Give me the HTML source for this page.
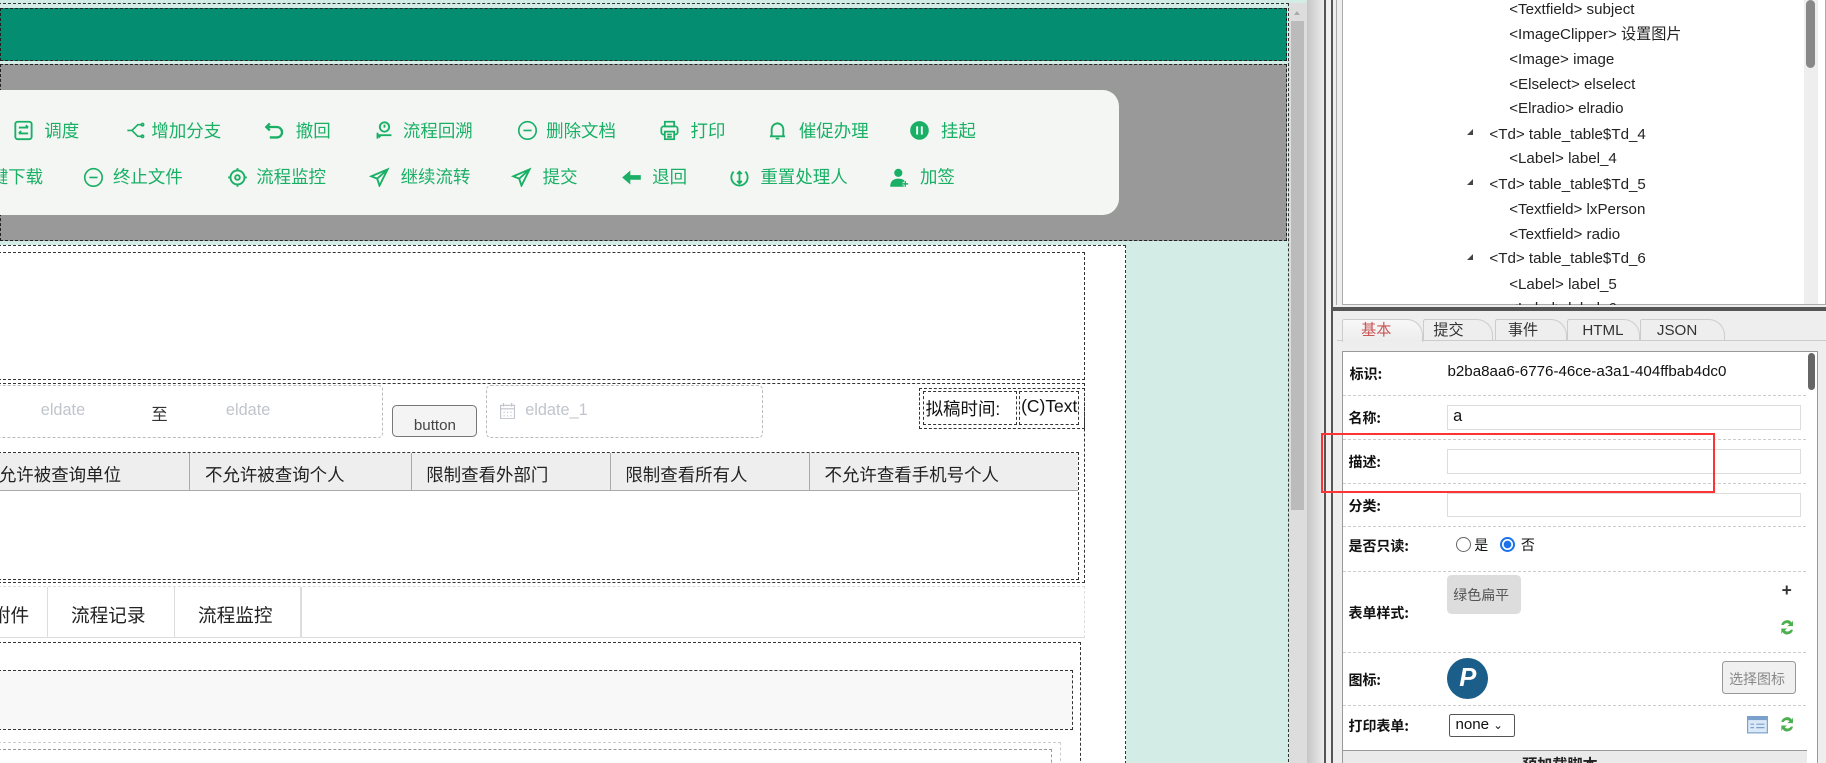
<!DOCTYPE html>
<html><head><meta charset="utf-8">
<style>
*{box-sizing:border-box;margin:0;padding:0}
html,body{width:1826px;height:763px;overflow:hidden;background:#fff}
#root{zoom:1.1645;width:1568px;height:655px;position:relative;overflow:hidden;font-family:"Liberation Sans","Noto Sans CJK SC",sans-serif}
.a{position:absolute}
.dash{border:1px dashed #333}
.tb{color:#19b065;font-size:15px;white-space:nowrap}
.tb svg{position:absolute;width:18px;height:18px}
.tree{font-size:13px;color:#222;white-space:nowrap;line-height:16px;height:16px}
.lbl{font-size:12px;font-weight:bold;color:#111;font-family:"Noto Sans CJK SC",sans-serif}
.inp{border:1px solid #ddd;background:#fff;height:21px}
.sep{border-top:1px dashed #ccc;height:0}
.th{font-size:15px;color:#222;white-space:nowrap}
.tab{font-size:13px;color:#333;line-height:16px}
</style></head><body><div id="root">
<div class="a" style="left:0;top:0;width:1122px;height:655px;background:#d4ece6"></div>
<div class="a dash" style="left:-2px;top:3px;width:1109px;height:660px"></div>
<div class="a" style="left:0;top:7px;width:1105px;height:45px;background:#048d71;border:1px dashed #222"></div>
<div class="a" style="left:0;top:55px;width:1105px;height:152px;background:#999;border:1px dashed #222"></div>
<div class="a" style="left:-20px;top:77px;width:981px;height:108px;background:#f4f6f4;border-radius:14px"></div>

<div class="a tb" style="left:0;top:101px;width:961px;height:22px">
<svg style="left:11px;top:2px" viewBox="0 0 18 18" fill="none" stroke="#19b065" stroke-width="1.6"><rect x="2" y="1.5" width="14" height="15" rx="2"/><path d="M5 6.5h8M11 4.5l2 2M5 11.5h8M7 9.5l-2 2"/></svg><span class="a" style="left:38px;top:0">调度</span>
<svg style="left:107px;top:2px" viewBox="0 0 18 18" fill="none" stroke="#19b065" stroke-width="1.4"><path d="M2 9h4l5-5h3M6 9l5 5h3"/><circle cx="15" cy="4" r="1"/><circle cx="15" cy="14" r="1"/></svg><span class="a" style="left:130px;top:0">增加分支</span>
<svg style="left:227px;top:2px" viewBox="0 0 18 18" fill="none" stroke="#19b065" stroke-width="2"><path d="M5 3L2 6l3 3M2 6h9a4.5 4.5 0 010 9H5"/></svg><span class="a" style="left:254px;top:0">撤回</span>
<svg style="left:321px;top:2px" viewBox="0 0 18 18" fill="none" stroke="#19b065" stroke-width="1.6"><circle cx="9" cy="6" r="4"/><path d="M9 4v2.5M3 13h12M3 11v5M6 13l-2 2"/></svg><span class="a" style="left:346px;top:0">流程回溯</span>
<svg style="left:444px;top:2px" viewBox="0 0 18 18" fill="none" stroke="#19b065" stroke-width="1.4"><circle cx="9" cy="9" r="7.5"/><path d="M5.5 9h7"/></svg><span class="a" style="left:469px;top:0">删除文档</span>
<svg style="left:566px;top:2px" viewBox="0 0 18 18" fill="none" stroke="#19b065" stroke-width="1.5"><rect x="5" y="1.5" width="8" height="4"/><rect x="2" y="5.5" width="14" height="7" rx="2"/><rect x="5" y="10" width="8" height="6.5" fill="#f4f6f4"/><path d="M7 12.5h4M7 14.5h4"/></svg><span class="a" style="left:593px;top:0">打印</span>
<svg style="left:659px;top:2px" viewBox="0 0 18 18" fill="none" stroke="#19b065" stroke-width="1.6"><path d="M4 14V8a5 5 0 0110 0v6M2.5 14h13M7.5 16h3M9 2v1"/></svg><span class="a" style="left:686px;top:0">催促办理</span>
<svg style="left:781px;top:2px" viewBox="0 0 18 18"><circle cx="9" cy="9" r="8" fill="#19b065"/><path d="M7 5.5v7M11 5.5v7" stroke="#fff" stroke-width="1.6"/></svg><span class="a" style="left:808px;top:0">挂起</span>
</div>
<div class="a tb" style="left:0;top:141px;width:961px;height:22px">
<span class="a" style="left:-8px;top:0">键下载</span>
<svg style="left:71px;top:2px" viewBox="0 0 18 18" fill="none" stroke="#19b065" stroke-width="1.4"><circle cx="9" cy="9" r="7.5"/><path d="M5.5 9h7"/></svg><span class="a" style="left:97px;top:0">终止文件</span>
<svg style="left:195px;top:2px" viewBox="0 0 18 18" fill="none" stroke="#19b065" stroke-width="1.6"><circle cx="9" cy="9" r="6"/><circle cx="9" cy="9" r="2"/><path d="M9 1v2M9 15v2M1 9h2M15 9h2"/></svg><span class="a" style="left:220px;top:0">流程监控</span>
<svg style="left:317px;top:2px" viewBox="0 0 18 18" fill="none" stroke="#19b065" stroke-width="1.6"><path d="M16 2L2 8l5 2 2 6zM7 10l9-8"/></svg><span class="a" style="left:344px;top:0">继续流转</span>
<svg style="left:439px;top:2px" viewBox="0 0 18 18" fill="none" stroke="#19b065" stroke-width="1.6"><path d="M16 2L2 8l5 2 2 6zM7 10l9-8"/></svg><span class="a" style="left:466px;top:0">提交</span>
<svg style="left:533px;top:2px" viewBox="0 0 18 18"><path d="M1 9l7-6v4h9v4H8v4z" fill="#19b065"/></svg><span class="a" style="left:560px;top:0">退回</span>
<svg style="left:626px;top:2px" viewBox="0 0 18 18" fill="none" stroke="#19b065" stroke-width="1.6"><path d="M4 4a7 7 0 1010 0"/><path d="M9 4v10M7 6l2-2 2 2M7 12l2 2 2-2"/></svg><span class="a" style="left:653px;top:0">重置处理人</span>
<svg style="left:763px;top:2px" viewBox="0 0 18 18"><circle cx="8" cy="5" r="3.5" fill="#19b065"/><path d="M1 17c0-5 3-7 7-7s6 2 6 3v4z" fill="#19b065"/><path d="M14 12v5M11.5 14.5h5" stroke="#fff" stroke-width="2.5"/><path d="M14 12v5M11.5 14.5h5" stroke="#19b065" stroke-width="1.2"/></svg><span class="a" style="left:790px;top:0">加签</span>
</div>

<div class="a" style="left:-2px;top:210px;width:969px;height:450px;background:#fff;border:1px dashed #333"></div>
<div class="a dash" style="left:-2px;top:216px;width:934px;height:110px"></div>
<div class="a dash" style="left:-2px;top:329px;width:934px;height:172px"></div>
<div class="a" style="left:-10px;top:331px;width:339px;height:45px;border:1px dashed #bbb;border-radius:4px"></div>
<div class="a" style="left:35px;top:344px;font-size:14px;color:#c0c4cc">eldate</div>
<div class="a" style="left:130px;top:344px;font-size:14px;color:#333">至</div>
<div class="a" style="left:194px;top:344px;font-size:14px;color:#c0c4cc">eldate</div>
<div class="a" style="left:337px;top:348px;width:73px;height:27px;border:1px solid #777;border-radius:4px;background:#f4f4f4;font-size:13px;color:#444;text-align:center;padding-top:10px;line-height:14px">button</div>
<div class="a" style="left:417px;top:331px;width:238px;height:45px;border:1px dashed #bbb;border-radius:4px"></div>
<svg class="a" style="left:429px;top:346px" width="13" height="14" viewBox="0 0 13 14" fill="none" stroke="#c0c4cc"><rect x="0.5" y="2" width="12" height="11.5"/><path d="M3 0v3M10 0v3M0.5 5h12M3 8h1M6 8h1M9 8h1M3 11h1M6 11h1M9 11h1"/></svg>
<div class="a" style="left:451px;top:344px;font-size:14px;color:#c0c4cc">eldate_1</div>
<div class="a dash" style="left:789px;top:333px;width:143px;height:35px"></div>
<div class="a dash" style="left:793px;top:336px;width:80px;height:29px;font-size:15px;color:#111;padding:3px 0 0 1px">拟稿时间:</div>
<div class="a dash" style="left:875px;top:336px;width:52px;height:29px;font-size:15px;color:#111;padding:3px 0 0 1px;overflow:hidden;white-space:nowrap">(C)Text</div>
<div class="a dash" style="left:-2px;top:388px;width:929px;height:110px"></div>
<div class="a" style="left:0;top:389px;width:926px;height:33px;background:#eee;border-bottom:1px solid #aaa"></div>
<div class="a" style="left:162px;top:389px;width:1px;height:33px;background:#aaa"></div>
<div class="a" style="left:353px;top:389px;width:1px;height:33px;background:#aaa"></div>
<div class="a" style="left:524px;top:389px;width:1px;height:33px;background:#aaa"></div>
<div class="a" style="left:695px;top:389px;width:1px;height:33px;background:#aaa"></div>
<div class="a th" style="left:-1px;top:397px">允许被查询单位</div>
<div class="a th" style="left:176px;top:397px">不允许被查询个人</div>
<div class="a th" style="left:366px;top:397px">限制查看外部门</div>
<div class="a th" style="left:537px;top:397px">限制查看所有人</div>
<div class="a th" style="left:708px;top:397px">不允许查看手机号个人</div>
<div class="a" style="left:-2px;top:503px;width:934px;height:45px;border:1px dashed #ddd;border-bottom:1px solid #ddd"></div>
<div class="a" style="left:40px;top:504px;width:1px;height:43px;background:#ddd"></div>
<div class="a" style="left:149px;top:504px;width:1px;height:43px;background:#ddd"></div>
<div class="a" style="left:258px;top:504px;width:1px;height:43px;background:#ddd"></div>
<div class="a" style="left:-7px;top:516px;font-size:16px;color:#222">附件</div>
<div class="a" style="left:61px;top:516px;font-size:16px;color:#222">流程记录</div>
<div class="a" style="left:170px;top:516px;font-size:16px;color:#222">流程监控</div>
<div class="a dash" style="left:-2px;top:551px;width:930px;height:120px"></div>
<div class="a dash" style="left:-2px;top:575px;width:923px;height:52px;background:#f8f8f8"></div>
<div class="a" style="left:-2px;top:637px;width:913px;height:30px;border:1px dashed #ccc"></div>
<div class="a" style="left:-2px;top:643px;width:905px;height:30px;border:1px dashed #999"></div>

<div class="a" style="left:1107px;top:3px;width:15px;height:652px;background:#ddd"></div>
<div class="a" style="left:1109px;top:18px;width:11px;height:420px;background:#bbb"></div>
<div class="a" style="left:1111px;top:7px;width:0;height:0;border:3px solid transparent;border-bottom:4px solid #aaa"></div>
<div class="a" style="left:1122px;top:0;width:15px;height:655px;background:linear-gradient(90deg,#c6c6c6,#ececec)"></div>
<div class="a" style="left:1137px;top:0;width:2px;height:655px;background:#555"></div>
<div class="a" style="left:1139px;top:0;width:4px;height:655px;background:#f0f0f0"></div>
<div class="a" style="left:1143px;top:0;width:2px;height:655px;background:#555"></div>

<div class="a" style="left:1145px;top:0;width:423px;height:655px;background:#eee"></div>
<div class="a" style="left:1152px;top:0;width:416px;height:262px;background:#fff;border-left:1px solid #aaa;border-right:1px solid #aaa;border-bottom:1px solid #aaa"></div>
<div class="a" style="left:1147px;top:0;width:1px;height:262px;background:#aaa"></div>
<div class="a" style="left:1549px;top:0;width:12px;height:261px;background:#eee"></div>
<div class="a" style="left:1551px;top:0;width:8px;height:58px;background:#888;border-radius:4px"></div>
<div style="position:absolute;left:0;top:1px;width:1568px;height:262px;overflow:hidden">
<div class="a tree" style="left:1296px;top:0">&lt;Textfield&gt; subject</div>
<div class="a tree" style="left:1296px;top:21px">&lt;ImageClipper&gt; 设置图片</div>
<div class="a tree" style="left:1296px;top:43px">&lt;Image&gt; image</div>
<div class="a tree" style="left:1296px;top:64px">&lt;Elselect&gt; elselect</div>
<div class="a tree" style="left:1296px;top:85px">&lt;Elradio&gt; elradio</div>
<div class="a tree" style="left:1279px;top:107px">&lt;Td&gt; table_table$Td_4</div>
<div class="a tree" style="left:1296px;top:128px">&lt;Label&gt; label_4</div>
<div class="a tree" style="left:1279px;top:150px">&lt;Td&gt; table_table$Td_5</div>
<div class="a tree" style="left:1296px;top:172px">&lt;Textfield&gt; lxPerson</div>
<div class="a tree" style="left:1296px;top:193px">&lt;Textfield&gt; radio</div>
<div class="a tree" style="left:1279px;top:214px">&lt;Td&gt; table_table$Td_6</div>
<div class="a tree" style="left:1296px;top:236px">&lt;Label&gt; label_5</div>
<div class="a tree" style="left:1296px;top:257px">&lt;Label&gt; label_6</div>
<div class="a" style="left:1260px;top:110px;border-left:6px solid transparent;border-bottom:6px solid #444"></div>
<div class="a" style="left:1260px;top:153px;border-left:6px solid transparent;border-bottom:6px solid #444"></div>
<div class="a" style="left:1260px;top:217px;border-left:6px solid transparent;border-bottom:6px solid #444"></div>
</div>
<div class="a" style="left:1145px;top:262px;width:423px;height:393px;background:#eee"></div>
<div class="a" style="left:1145px;top:264px;width:423px;height:3px;background:#555"></div>
<div class="a" style="left:1148px;top:292px;width:420px;height:1px;background:#ccc"></div>
<div class="a tab" style="left:1222px;top:274px;width:60px;height:19px;border:1px solid #ccc;border-bottom:none;border-radius:2px 14px 0 0;padding:2px 0 0 8px">提交</div>
<div class="a tab" style="left:1284px;top:274px;width:62px;height:19px;border:1px solid #ccc;border-bottom:none;border-radius:2px 14px 0 0;padding:2px 0 0 10px">事件</div>
<div class="a tab" style="left:1346px;top:274px;width:62px;height:19px;border:1px solid #ccc;border-bottom:none;border-radius:2px 14px 0 0;padding:2px 0 0 12px">HTML</div>
<div class="a tab" style="left:1408px;top:274px;width:73px;height:19px;border:1px solid #ccc;border-bottom:none;border-radius:2px 14px 0 0;padding:2px 0 0 14px">JSON</div>
<div class="a tab" style="left:1152px;top:274px;width:70px;height:20px;border:1px solid #ccc;border-bottom:none;border-radius:2px 14px 0 0;background:linear-gradient(#f8f8f8,#ececec);color:#c55;padding:2px 0 0 16px">基本</div>
<div class="a" style="left:1152px;top:301px;width:409px;height:360px;background:#fff;border:1px solid #999"></div>
<div class="a" style="left:1553px;top:303px;width:6px;height:32px;background:#666;border-radius:3px"></div>
<div class="a lbl" style="left:1159px;top:313px">标识:</div>
<div class="a" style="left:1243px;top:312px;font-size:13px;color:#111">b2ba8aa6-6776-46ce-a3a1-404ffbab4dc0</div>
<div class="a sep" style="left:1153px;top:339px;width:398px"></div>
<div class="a lbl" style="left:1158px;top:350px">名称:</div>
<div class="a inp" style="left:1243px;top:348px;width:304px;font-size:14px;padding:1px 0 0 4px;color:#111">a</div>
<div class="a sep" style="left:1153px;top:377px;width:398px"></div>
<div class="a lbl" style="left:1158px;top:388px">描述:</div>
<div class="a inp" style="left:1243px;top:386px;width:304px"></div>
<div class="a sep" style="left:1153px;top:415px;width:398px"></div>
<div class="a lbl" style="left:1158px;top:426px">分类:</div>
<div class="a inp" style="left:1243px;top:423px;width:304px"></div>
<div class="a sep" style="left:1153px;top:452px;width:398px"></div>
<div class="a lbl" style="left:1158px;top:460px">是否只读:</div>
<div class="a" style="left:1250px;top:461px;width:13px;height:13px;border:1px solid #666;border-radius:50%"></div>
<div class="a" style="left:1266px;top:459px;font-size:12px;color:#111">是</div>
<div class="a" style="left:1288px;top:461px;width:13px;height:13px;border:2px solid #1a73e8;border-radius:50%;background:radial-gradient(#1a73e8 3px,#fff 3.5px)"></div>
<div class="a" style="left:1306px;top:459px;font-size:12px;color:#111">否</div>
<div class="a sep" style="left:1153px;top:490px;width:398px"></div>
<div class="a" style="left:1243px;top:494px;width:63px;height:33px;background:#ddd;border-radius:4px;font-size:12px;color:#555;padding:8px 0 0 5px">绿色扁平</div>
<div class="a lbl" style="left:1158px;top:518px">表单样式:</div>
<div class="a" style="left:1530px;top:498px;font-size:15px;font-weight:bold;color:#333">+</div>
<svg class="a" style="left:1528px;top:531px" width="14" height="16" viewBox="0 0 14 16"><path d="M2 6a5 5 0 019-2l1-2v5H7l2-1.5A3 3 0 004 6z" fill="#4caf50"/><path d="M12 10a5 5 0 01-9 2l-1 2V9h5l-2 1.5A3 3 0 0010 10z" fill="#4caf50"/></svg>
<div class="a sep" style="left:1153px;top:560px;width:398px"></div>
<div class="a lbl" style="left:1158px;top:575px">图标:</div>
<div class="a" style="left:1243px;top:565px;width:35px;height:35px;border-radius:50%;background:#1b5e8a;color:#fff;font-weight:bold;font-style:italic;font-size:22px;text-align:center;line-height:35px">P</div>
<div class="a" style="left:1479px;top:568px;width:63px;height:28px;border:1px solid #999;border-radius:3px;background:#f0f0f0;font-size:12px;color:#888;padding:6px 0 0 5px">选择图标</div>
<div class="a sep" style="left:1153px;top:605px;width:398px"></div>
<div class="a lbl" style="left:1158px;top:615px">打印表单:</div>
<div class="a" style="left:1244px;top:613px;width:57px;height:20px;border:1px solid #555;border-radius:2px;font-size:13px;color:#111;padding:1px 0 0 5px">none <span style="font-size:10px">&#8964;</span></div>
<svg class="a" style="left:1500px;top:615px" width="18" height="15" viewBox="0 0 18 15"><rect x="0.5" y="0.5" width="17" height="14" fill="#dbe8f7" stroke="#7aa0cc"/><rect x="0.5" y="0.5" width="17" height="3" fill="#7aa0cc"/><path d="M3 7h3M8 7h7M3 10h3M8 10h7" stroke="#7aa0cc"/></svg>
<svg class="a" style="left:1528px;top:614px" width="14" height="16" viewBox="0 0 14 16"><path d="M2 6a5 5 0 019-2l1-2v5H7l2-1.5A3 3 0 004 6z" fill="#4caf50"/><path d="M12 10a5 5 0 01-9 2l-1 2V9h5l-2 1.5A3 3 0 0010 10z" fill="#4caf50"/></svg>
<div class="a" style="left:1153px;top:644px;width:399px;height:11px;background:#eaeaea;border-top:1px solid #999"></div>
<div class="a" style="left:1307px;top:647px;font-size:13px;font-weight:bold;color:#222">预加载脚本</div>
<div class="a" style="left:1134px;top:372px;width:339px;height:51px;border:2px solid #f33"></div>
</div></body></html>
